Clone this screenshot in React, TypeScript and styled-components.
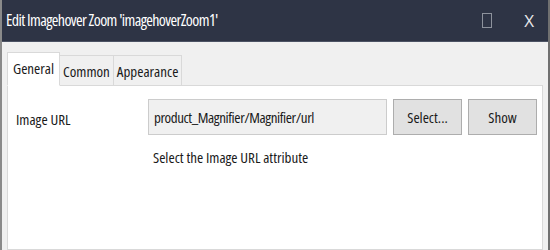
import styled, { createGlobalStyle } from "styled-components";

const GlobalStyle = createGlobalStyle`
  html, body {
    margin: 0;
    padding: 0;
    background: #f0f0f0;
  }
  body {
    font-family: "Open Sans", "Noto Sans", sans-serif;
    font-stretch: 75%;
  }
`;

export default function App() {
    return (
        <>
            <GlobalStyle />
            <DialogWindow>
                <TitleBar>
                    <Title>Edit Imagehover Zoom 'imagehoverZoom1'</Title>
                    <WindowControls>
                        <MaximizeBox />
                        <CloseGlyph>X</CloseGlyph>
                    </WindowControls>
                </TitleBar>
                <DialogBody>
                    <TabStrip>
                        <Tab active>General</Tab>
                        <Tab>Common</Tab>
                        <Tab>Appearance</Tab>
                    </TabStrip>
                    <TabPanel>
                        <FieldRow>
                            <FieldLabel>Image URL</FieldLabel>
                            <UrlInput>product_Magnifier/Magnifier/url</UrlInput>
                            <DialogButton>Select...</DialogButton>
                            <DialogButton>Show</DialogButton>
                            <FieldHint>Select the Image URL attribute</FieldHint>
                        </FieldRow>
                    </TabPanel>
                </DialogBody>
            </DialogWindow>
        </>
    )
}

const DialogWindow = styled.div`
  width: 550px;
  height: 250px;
  box-sizing: border-box;
  display: flex;
  flex-direction: column;
  overflow: hidden;
  background: #f0f0f0;
  border-left: 2px solid #8a8a8a;
  border-right: 2px solid #707070;
`

const TitleBar = styled.div`
  height: 41px;
  flex-shrink: 0;
  display: flex;
  align-items: center;
  justify-content: space-between;
  padding-left: 4px;
  background: #2e3445;
  border-bottom: 1px solid #4c5364;
`

const Title = styled.div`
  color: #ffffff;
  font-size: 16px;
  letter-spacing: -0.6px;
  padding-bottom: 1px;
`

const WindowControls = styled.div`
  display: flex;
  align-items: center;
  gap: 32px;
  padding-right: 14px;
`

const MaximizeBox = styled.div`
  width: 8px;
  height: 13px;
  border: 1px solid #8d929c;
`

const CloseGlyph = styled.div`
  color: #e8e8ea;
  font-size: 17px;
  font-stretch: 100%;
  line-height: 1;
`

const DialogBody = styled.div`
  flex: 1;
  display: flex;
  flex-direction: column;
  padding: 10px 5px 0 5px;
`

const TabStrip = styled.div`
  display: flex;
  align-items: flex-end;
  margin-bottom: -1px;
`

const Tab = styled.div<{ active?: boolean }>`
  position: relative;
  z-index: ${p => (p.active ? 2 : 1)};
  height: ${p => (p.active ? "34px" : "31px")};
  box-sizing: border-box;
  display: flex;
  align-items: center;
  padding: ${p => (p.active ? "0 5px 2px" : "0 3px 0")};
  margin-left: ${p => (p.active ? "0" : "-1px")};
  font-size: 15px;
  color: #1a1a1a;
  background: ${p => (p.active ? "#ffffff" : "#f0f0f0")};
  border: 1px solid #d9d9d9;
  border-bottom: ${p => (p.active ? "1px solid #ffffff" : "1px solid #d9d9d9")};
`

const TabPanel = styled.div`
  flex: 1;
  background: #ffffff;
  border: 1px solid #d9d9d9;
  padding: 13px 5px 0 8px;
`

const FieldRow = styled.div`
  display: grid;
  grid-template-columns: 126px 239px 69px 69px;
  grid-template-rows: 36px auto;
  column-gap: 6px;
  row-gap: 12px;
  align-items: center;
  font-size: 15px;
  color: #1a1a1a;
`

const FieldLabel = styled.div`
  padding-top: 3px;
`

const UrlInput = styled.div`
  height: 36px;
  box-sizing: border-box;
  display: flex;
  align-items: center;
  padding-left: 5px;
  letter-spacing: -0.4px;
  background: #f0f0f0;
  border: 1px solid #cccccc;
  white-space: nowrap;
  overflow: hidden;
`

const DialogButton = styled.div`
  height: 36px;
  box-sizing: border-box;
  display: flex;
  align-items: center;
  justify-content: center;
  background: #e1e1e1;
  border: 1px solid #adadad;
`

const FieldHint = styled.div`
  grid-column: 2 / 5;
  padding-left: 5px;
`
